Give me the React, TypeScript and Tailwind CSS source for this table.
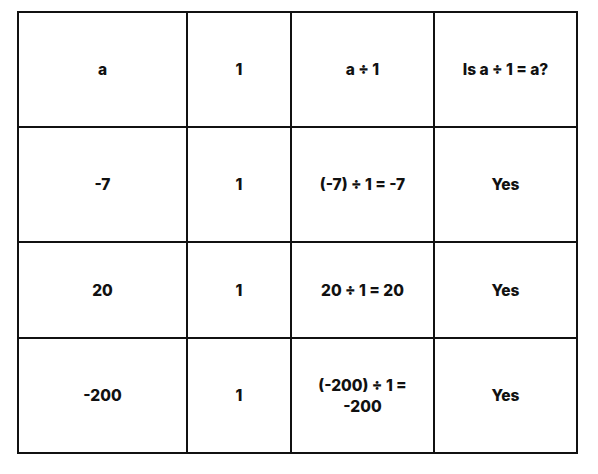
const rows = [
  ['a', '1', 'a ÷ 1', 'Is a ÷ 1 = a?'],
  ['-7', '1', '(-7) ÷ 1 = -7', 'Yes'],
  ['20', '1', '20 ÷ 1 = 20', 'Yes'],
  ['-200', '1', '(-200) ÷ 1 = -200', 'Yes'],
];

const App = () => {
  return (
    <div className="w-[598px] h-[474px] bg-white pt-[11px] pl-[17px]" style={{ fontFamily: 'Inter, sans-serif' }}>
      <div className="inline-grid grid-cols-[167px_102px_141px_141px] grid-rows-[113px_113px_94px_113px] gap-[2px] p-[2px] bg-[#111]">
        {rows.flatMap((row, r) =>
          row.map((cell, c) => (
            <div
              key={`${r}-${c}`}
              className="bg-white flex items-center justify-center text-center px-5 text-[15.5px] leading-[21px] font-extrabold text-[#111]"
            >
              {cell}
            </div>
          ))
        )}
      </div>
    </div>
  );
};

export default App;
